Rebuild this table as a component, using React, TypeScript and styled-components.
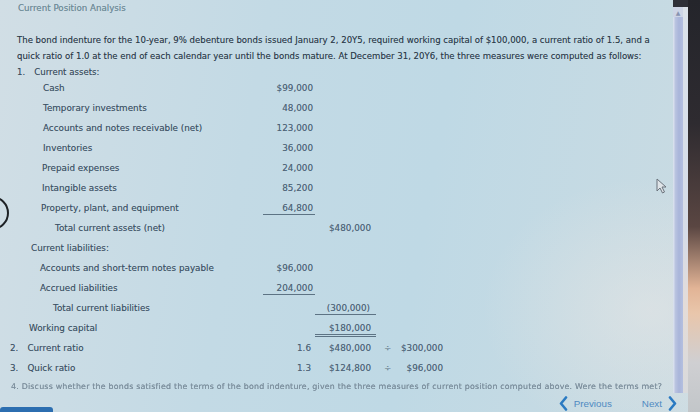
import React from "react";
import styled, { createGlobalStyle } from "styled-components";

const Global = createGlobalStyle`
  html, body { margin: 0; padding: 0; }
  body {
    width: 700px;
    height: 412px;
    overflow: hidden;
    background: #c4dae4;
    font-family: "DejaVu Sans", Verdana, sans-serif;
  }
`;

const Screen = styled.div`
  position: relative;
  width: 700px;
  height: 412px;
  display: flex;
  overflow: hidden;
  text-shadow: 0 0 0.6px rgba(50, 70, 90, 0.45);
  background:
    radial-gradient(ellipse 240px 190px at 650px 310px, rgba(232, 230, 228, 0.55), rgba(232, 230, 228, 0) 70%),
    linear-gradient(100deg, #d1dee5 0%, #c3dae5 35%, #bfd9e5 60%, #cadbe2 100%);
`;

const Display = styled.div`
  flex: 1;
  display: flex;
  flex-direction: column;
  min-width: 0;
`;

const Upper = styled.div`
  flex: 1;
  display: flex;
  min-height: 0;
`;

const Main = styled.main`
  flex: 1;
  display: flex;
  flex-direction: column;
  min-width: 0;
`;

const TopEdge = styled.div`
  height: 3px;
  background: linear-gradient(90deg, rgba(40, 42, 50, 0) 0%, rgba(40, 42, 50, 0) 35%, #30333c 55%, #2a2c33 100%);
`;

const Title = styled.div`
  margin-top: 2px;
  padding-left: 18px;
  height: 13px;
  line-height: 13px;
  font-size: 8.7px;
  color: #6f8e9a;
`;

const Para = styled.p`
  margin: 17px 0 0 17px;
  font-size: 8.55px;
  line-height: 16px;
  color: #2c3a48;
  white-space: nowrap;
`;

const Section = styled.div<{ $indent: number }>`
  height: 16px;
  line-height: 16px;
  padding-left: ${(p) => p.$indent}px;
  font-size: 8.6px;
  color: #3b4d5e;
  display: flex;
  gap: 9px;
`;

const Rows = styled.div`
  display: flex;
  flex-direction: column;
  margin-top: -2px;
`;

const Row = styled.div`
  display: grid;
  grid-template-columns: 263px 52px 61px 22px 47px;
  height: 20px;
  align-items: center;
  font-size: 8.8px;
`;

const Label = styled.div<{ $indent: number }>`
  padding-left: ${(p) => p.$indent}px;
  white-space: nowrap;
  color: #3d5265;
  display: flex;
  gap: 9px;
`;

const Num = styled.div<{ $rule?: "single" | "double"; $pad?: number }>`
  align-self: start;
  height: 16px;
  display: flex;
  align-items: flex-end;
  justify-content: flex-end;
  line-height: 11px;
  padding-right: ${(p) => p.$pad ?? 2}px;
  color: #4d6377;
  white-space: nowrap;
  border-bottom: ${(p) =>
    p.$rule === "single"
      ? "1.5px solid #5d7384"
      : p.$rule === "double"
      ? "3px double #5d7384"
      : "none"};
`;

const Op = styled.div`
  padding-left: 8px;
  color: #7a8e9c;
`;

const Faint = styled.div`
  margin: 3px 0 0 11px;
  height: 12px;
  line-height: 12px;
  font-size: 7.9px;
  color: #7d8f9d;
  white-space: nowrap;
  filter: blur(0.6px);
  letter-spacing: 0.2px;
`;

const Footer = styled.div`
  height: 19px;
  display: flex;
  align-items: flex-end;
  justify-content: space-between;
`;

const BlueTab = styled.div`
  width: 53px;
  height: 5px;
  background: #2c6eb0;
  border-radius: 3px 3px 0 0;
`;

const Nav = styled.nav`
  display: flex;
  align-items: center;
  gap: 30px;
  padding-right: 11px;
  margin-bottom: 1px;
`;

const NavButton = styled.button`
  display: flex;
  align-items: center;
  gap: 6px;
  border: none;
  background: none;
  padding: 0;
  font-family: "Liberation Sans", Arial, sans-serif;
  font-size: 9.8px;
  color: #4f8ac2;
  text-shadow: none;
  cursor: pointer;
`;

const Scrollbar = styled.div`
  width: 10px;
  display: flex;
  flex-direction: column;
  background: linear-gradient(90deg, #dfe6f0 0%, #b9c3e0 25%, #a9b5da 60%, #b4bfdf 100%);
  border-top: 7px solid #2e3038;
`;

const ScrollArrow = styled.div`
  height: 10px;
  display: flex;
  align-items: center;
  justify-content: center;
  background: #cdd5e6;
  color: #8893b0;
  font-size: 6px;
  text-shadow: none;
`;

const Gutter = styled.div`
  width: 5px;
  background: linear-gradient(180deg, #2e3038 0px, #2e3038 7px, #dbe2ea 7px, #d6dce8 60%, #e4dcd8 78%, #d9dadc 100%);
`;

const Bezel = styled.div`
  width: 12px;
  background: linear-gradient(180deg, #24252b 0%, #2e2b30 30%, #5a4642 55%, #e2b496 70%, #e9c6ab 76%, #cfcfd2 88%, #c2c6c9 100%);
`;

const Arc = styled.div`
  position: absolute;
  left: -25px;
  top: 196px;
  width: 30px;
  height: 30px;
  border: 2px solid #1e2226;
  border-radius: 50%;
`;

const Cursor = styled.svg`
  position: absolute;
  left: 656px;
  top: 178px;
`;

type Line = {
  label: string;
  indent: number;
  num?: string;
  a?: string;
  b?: string;
  aRule?: "single" | "double";
  numRule?: "single" | "double";
  ratio?: boolean;
  marker?: string;
};

const lines: Line[] = [
  { label: "Cash", indent: 43, num: "$99,000" },
  { label: "Temporary investments", indent: 43, num: "48,000" },
  { label: "Accounts and notes receivable (net)", indent: 43, num: "123,000" },
  { label: "Inventories", indent: 43, num: "36,000" },
  { label: "Prepaid expenses", indent: 42, num: "24,000" },
  { label: "Intangible assets", indent: 42, num: "85,200" },
  { label: "Property, plant, and equipment", indent: 41, num: "64,800", numRule: "single" },
  { label: "Total current assets (net)", indent: 55, a: "$480,000" },
  { label: "Current liabilities:", indent: 31 },
  { label: "Accounts and short-term notes payable", indent: 40, num: "$96,000" },
  { label: "Accrued liabilities", indent: 40, num: "204,000", numRule: "single" },
  { label: "Total current liabilities", indent: 53, a: "(300,000)", aRule: "single" },
  { label: "Working capital", indent: 29, a: "$180,000", aRule: "double" },
  { label: "Current ratio", indent: 10, marker: "2.", num: "1.6", ratio: true, a: "$480,000", b: "$300,000" },
  { label: "Quick ratio", indent: 10, marker: "3.", num: "1.3", ratio: true, a: "$124,800", b: "$96,000" },
];

function Chevron({ dir }: { dir: "left" | "right" }) {
  return (
    <svg width="9" height="15" viewBox="0 0 9 15">
      <path
        d={dir === "left" ? "M7 1.5 L2 7.5 L7 13.5" : "M2 1.5 L7 7.5 L2 13.5"}
        fill="none"
        stroke="#2a7ac2"
        strokeWidth="2.6"
        strokeLinecap="round"
        strokeLinejoin="round"
      />
    </svg>
  );
}

export default function App() {
  return (
    <>
      <Global />
      <Screen>
        <Display>
          <Upper>
            <Main>
              <TopEdge />
              <Title>Current Position Analysis</Title>
              <Para>
                The bond indenture for the 10-year, 9% debenture bonds issued January 2, 20Y5, required working capital of $100,000, a current ratio of 1.5, and a
                <br />
                quick ratio of 1.0 at the end of each calendar year until the bonds mature. At December 31, 20Y6, the three measures were computed as follows:
              </Para>
              <Section $indent={17}>
                <span>1.</span>
                <span>Current assets:</span>
              </Section>
              <Rows>
                {lines.map((l) => (
                  <Row key={l.label}>
                    <Label $indent={l.indent}>
                      {l.marker && <span>{l.marker}</span>}
                      <span>{l.label}</span>
                    </Label>
                    <Num $rule={l.numRule} $pad={l.ratio ? 4 : 2}>
                      {l.num ?? ""}
                    </Num>
                    <Num $rule={l.aRule} $pad={l.a?.startsWith("(") ? 6 : 5}>
                      {l.a ?? ""}
                    </Num>
                    <Op>{l.b ? "÷" : ""}</Op>
                    <Num $pad={2}>{l.b ?? ""}</Num>
                  </Row>
                ))}
              </Rows>
              <Faint>
                4. Discuss whether the bonds satisfied the terms of the bond indenture, given the three measures of current position computed above. Were the terms met?
              </Faint>
            </Main>
            <Scrollbar>
              <ScrollArrow>▲</ScrollArrow>
            </Scrollbar>
            <Gutter />
          </Upper>
          <Footer>
            <BlueTab />
            <Nav>
              <NavButton>
                <Chevron dir="left" />
                Previous
              </NavButton>
              <NavButton>
                Next
                <Chevron dir="right" />
              </NavButton>
            </Nav>
          </Footer>
        </Display>
        <Bezel />
        <Arc />
        <Cursor width="11" height="16" viewBox="0 0 11 16">
          <path d="M1 1 L1 13 L4 10 L6.5 15 L8.5 14 L6 9 L10 9 Z" fill="#dfe4e8" stroke="#6b737c" strokeWidth="1" strokeLinejoin="round" />
        </Cursor>
      </Screen>
    </>
  );
}
